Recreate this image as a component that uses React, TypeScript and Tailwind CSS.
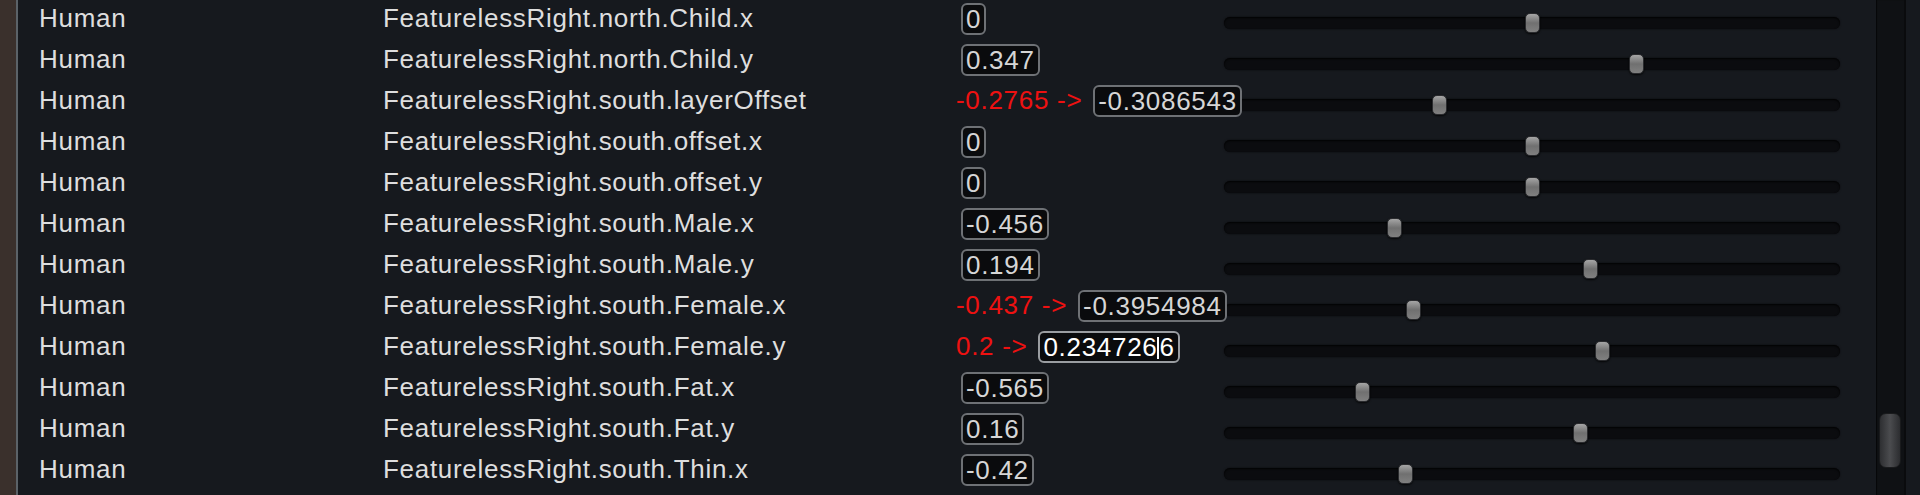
type Row = {
  path: string;
  value: string;
  prev?: string;
  editing?: boolean;
};

const rows: Row[] = [
  { path: "FeaturelessRight.north.Child.x", value: "0" },
  { path: "FeaturelessRight.north.Child.y", value: "0.347" },
  { path: "FeaturelessRight.south.layerOffset", value: "-0.3086543", prev: "-0.2765" },
  { path: "FeaturelessRight.south.offset.x", value: "0" },
  { path: "FeaturelessRight.south.offset.y", value: "0" },
  { path: "FeaturelessRight.south.Male.x", value: "-0.456" },
  { path: "FeaturelessRight.south.Male.y", value: "0.194" },
  { path: "FeaturelessRight.south.Female.x", value: "-0.3954984", prev: "-0.437" },
  { path: "FeaturelessRight.south.Female.y", value: "0.2347266", prev: "0.2", editing: true },
  { path: "FeaturelessRight.south.Fat.x", value: "-0.565" },
  { path: "FeaturelessRight.south.Fat.y", value: "0.16" },
  { path: "FeaturelessRight.south.Thin.x", value: "-0.42" },
];

function ValueBox({ value, editing }: { value: string; editing?: boolean }) {
  if (editing) {
    // caret sits before the last digit while typing
    return (
      <div className="relative z-10 flex h-[32px] shrink-0 items-start whitespace-nowrap rounded-[6px] border-2 border-[#9a9da1] bg-[#0a0b0d] px-[3px] leading-[28px] text-white">
        <span>{value.slice(0, -1)}</span>
        <span className="mt-[4px] inline-block h-[22px] w-[2px] bg-white" />
        <span>{value.slice(-1)}</span>
      </div>
    );
  }
  return (
    <div className="relative z-10 h-[32px] shrink-0 whitespace-nowrap rounded-[6px] border-2 border-[#6e7175] bg-[#0a0b0d] px-[3px] leading-[28px] text-[#d6d6d6]">
      {value}
    </div>
  );
}

function Slider({ value }: { value: number }) {
  const t = Math.min(1, Math.max(0, (value + 1) / 2));
  return (
    <div className="relative mt-[17px] h-[12px] min-w-0 flex-1 rounded-full bg-[#0b0c0f] shadow-[inset_0_1px_2px_rgba(0,0,0,0.9),0_0_2px_rgba(0,0,0,0.7)]">
      <div
        className="absolute top-[-4px] h-[20px] w-[15px] rounded-[5px] border border-[#2a2b2e] bg-linear-to-b from-[#a6a6a6] via-[#707070] to-[#808080] shadow-[0_1px_2px_rgba(0,0,0,0.8)]"
        style={{ left: `calc(${t} * (100% - 15px))` }}
      />
    </div>
  );
}

export default function App() {
  return (
    <div className="flex h-[495px] w-full overflow-hidden bg-[#16191e] font-['Liberation_Sans',Arial,sans-serif] text-[26px] tracking-[0.7px] text-[#dedede]">
      <div className="w-[16px] shrink-0 bg-[#3a302c]" />
      <div className="w-[2px] shrink-0 bg-[#5b6268]" />

      <div className="flex min-w-0 flex-1 flex-col pr-[36px]">
        {rows.map((row) => (
          <div key={row.path} className="flex h-[41px] shrink-0 items-start whitespace-nowrap">
            <div className="mt-[3px] w-[364px] shrink-0 pl-[21px] leading-[30px]">Human</div>
            <div className="mt-[3px] w-[574px] shrink-0 pl-[1px] leading-[30px]">{row.path}</div>
            <div className="mt-[3px] flex w-[268px] shrink-0 items-start">
              {row.prev ? (
                <>
                  <span className="mr-[11px] shrink-0 leading-[30px] text-[#ee1111]">{row.prev} -&gt;</span>
                  <ValueBox value={row.value} editing={row.editing} />
                </>
              ) : (
                <div className="ml-[5px]">
                  <ValueBox value={row.value} />
                </div>
              )}
            </div>
            <Slider value={parseFloat(row.value)} />
          </div>
        ))}
      </div>

      {/* vertical scrollbar */}
      <div className="w-[28px] shrink-0 bg-[#0f1114] px-[3px] pt-[413px] shadow-[inset_1px_0_1px_rgba(0,0,0,0.6)]">
        <div className="h-[55px] w-[22px] rounded-[7px] border border-[#1a1b1d] bg-linear-to-r from-[#2e2f32] via-[#4b4c4f] to-[#2c2d30]" />
      </div>
      <div className="w-[2px] shrink-0 bg-[#0a0b0d]" />
      <div className="w-[14px] shrink-0 bg-[#16191e]" />
    </div>
  );
}
